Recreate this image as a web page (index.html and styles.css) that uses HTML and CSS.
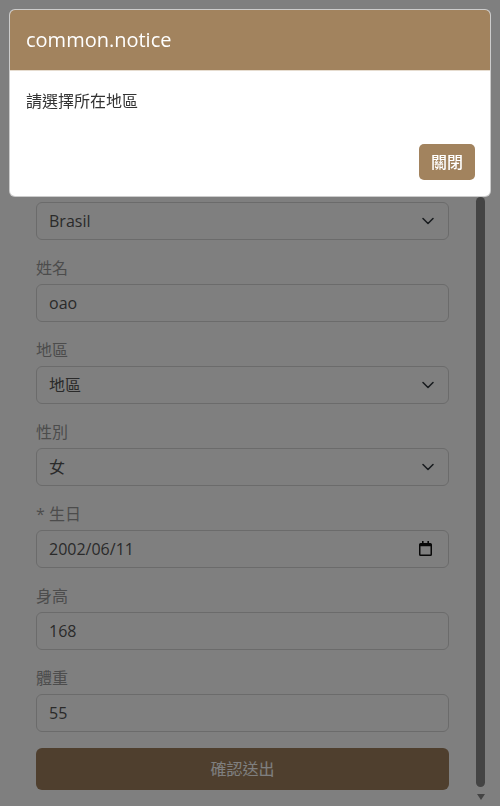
FILE: index.html
```html
<!DOCTYPE html>
<html lang="zh-Hant">
<head>
    <meta charset="utf-8">
    <title>會員資料</title>
    <link rel="stylesheet" href="styles.css">
</head>
<body>
    <div class="app">
        <form class="profile-form">
            <div class="field-wrap">
                <select class="form-control">
                    <option>Brasil</option>
                </select>
                <svg class="chevron" width="16" height="12" viewBox="0 0 16 12"><path d="M3 3.5l5 5 5-5" fill="none" stroke="#343a40" stroke-width="1.6" stroke-linecap="round" stroke-linejoin="round"/></svg>
            </div>
            <div class="form-group">
                <label class="form-label">姓名</label>
                <input class="form-control" type="text" value="oao">
            </div>
            <div class="form-group">
                <label class="form-label">地區</label>
                <div class="field-wrap">
                    <select class="form-control">
                        <option>地區</option>
                    </select>
                    <svg class="chevron" width="16" height="12" viewBox="0 0 16 12"><path d="M3 3.5l5 5 5-5" fill="none" stroke="#343a40" stroke-width="1.6" stroke-linecap="round" stroke-linejoin="round"/></svg>
                </div>
            </div>
            <div class="form-group">
                <label class="form-label">性別</label>
                <div class="field-wrap">
                    <select class="form-control">
                        <option>女</option>
                        <option>男</option>
                    </select>
                    <svg class="chevron" width="16" height="12" viewBox="0 0 16 12"><path d="M3 3.5l5 5 5-5" fill="none" stroke="#343a40" stroke-width="1.6" stroke-linecap="round" stroke-linejoin="round"/></svg>
                </div>
            </div>
            <div class="form-group">
                <label class="form-label">* 生日</label>
                <div class="field-wrap">
                    <input class="form-control" type="text" value="2002/06/11" readonly>
                    <svg class="calendar" width="13" height="15" viewBox="0 0 13 15"><path fill="#111" fill-rule="evenodd" d="M3 0h1.6v2h3.8V0H10v2h1.4A1.6 1.6 0 0 1 13 3.6v9.8A1.6 1.6 0 0 1 11.4 15H1.6A1.6 1.6 0 0 1 0 13.4V3.6A1.6 1.6 0 0 1 1.6 2H3z M1.5 5.2v8.3h10V5.2z"/></svg>
                </div>
            </div>
            <div class="form-group">
                <label class="form-label">身高</label>
                <input class="form-control" type="text" value="168">
            </div>
            <div class="form-group">
                <label class="form-label">體重</label>
                <input class="form-control" type="text" value="55">
            </div>

            <button type="button" class="btn-submit">確認送出</button>
        </form>

        <!-- scroll position of the form, drawn as a thin bar -->
        <div class="scrollbar">
            <div class="scroll-thumb"></div>
            <div class="scroll-arrow"></div>
        </div>
    </div>

    <div class="backdrop"></div>
    <div class="modal">
        <div class="modal-content">
            <div class="modal-header">
                <h5 class="modal-title">common.notice</h5>
            </div>
            <div class="modal-body">請選擇所在地區</div>
            <div class="modal-footer">
                <button type="button" class="btn-close">關閉</button>
            </div>
        </div>
    </div>
</body>
</html>
```

FILE: styles.css
```css
html, body {
    margin: 0;
    height: 806px;
    overflow: hidden;
    background-color: #fff;
}
body {
    font-family: "Open Sans", "Noto Sans CJK TC", sans-serif;
    font-size: 16px;
    line-height: 1.5;
    color: #212529;
}
.app {
    display: flex;
    height: 804px;
    background-color: #fff;
    border-radius: 0 0 4px 4px;
}

.profile-form {
    width: 413px;
    display: flex;
    flex-direction: column;
    gap: 12px;
    padding: 202px 25px 14px 36px;
    margin: 0;
}
.form-label {
    display: block;
    padding-top: 4px;
    margin-bottom: 4px;
    line-height: 24px;
    color: #999;
}
.form-control {
    display: block;
    width: 100%;
    height: 38px;
    box-sizing: border-box;
    padding: 6px 12px;
    border: 1px solid #d6d6d6;
    border-radius: 6px;
    background-color: #fff;
    font: inherit;
    color: #555;
    outline: none;
}
select.form-control {
    appearance: none;
    padding-right: 36px;
}
.field-wrap {
    position: relative;
}
.chevron {
    position: absolute;
    right: 13px;
    top: 13px;
    pointer-events: none;
}
.calendar {
    position: absolute;
    right: 17px;
    top: 11px;
    pointer-events: none;
}
.btn-submit {
    margin-top: 4px;
    height: 42px;
    border: 0;
    border-radius: 6px;
    background-color: #9e7e5c;
    color: #fff;
    font: inherit;
}

/* thin scrollbar with a small down arrow */
.scrollbar {
    width: 13px;
    display: flex;
    flex-direction: column;
    align-items: center;
}
.scroll-thumb {
    width: 9px;
    height: 590px;
    margin-top: 197px;
    border-radius: 4.5px;
    background-color: #888;
}
.scroll-arrow {
    width: 0;
    height: 0;
    margin-top: 7px;
    border-left: 4.5px solid transparent;
    border-right: 4.5px solid transparent;
    border-top: 6px solid #888;
}

/* notice dialog */
.backdrop {
    position: fixed;
    inset: 0;
    background-color: rgba(0, 0, 0, 0.5);
}
.modal {
    position: fixed;
    top: 9px;
    left: 9px;
    right: 9px;
}
.modal-content {
    background-color: #fff;
    border: 1px solid rgba(0, 0, 0, 0.2);
    border-radius: 6px;
    overflow: hidden;
}
.modal-header {
    padding: 15px 16px;
    background-color: #a2835e;
    border-bottom: 1px solid #e6dccf;
}
.modal-title {
    margin: 0;
    font-size: 20px;
    line-height: 30px;
    font-weight: 400;
    color: #fff;
}
.modal-body {
    padding: 18px 16px 15px;
    color: #333;
}
.modal-footer {
    display: flex;
    justify-content: flex-end;
    padding: 12px 11px;
}
.btn-close {
    margin: 4px;
    padding: 6px 12px;
    border: 0;
    border-radius: 5px;
    background-color: #a2835e;
    color: #fff;
    font: inherit;
    font-weight: 500;
    line-height: 24px;
}
```
